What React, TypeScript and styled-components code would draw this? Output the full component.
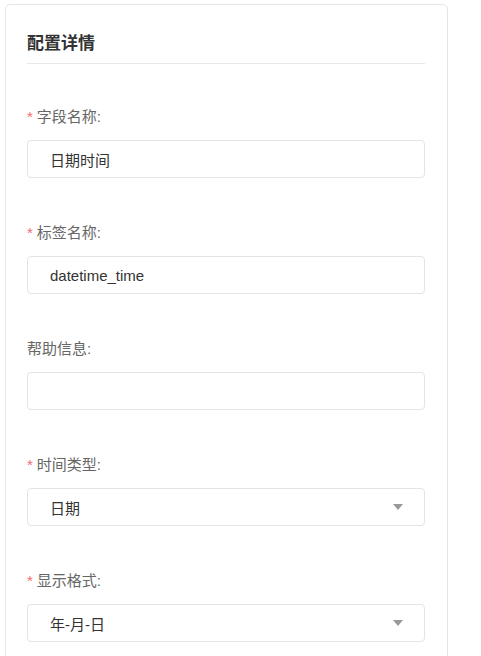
import React from "react";
import styled, { createGlobalStyle } from "styled-components";

type Field = {
  label: string;
  required?: boolean;
  value?: string;
  select?: boolean;
};

const fields: Field[] = [
  { label: "字段名称", required: true, value: "日期时间" },
  { label: "标签名称", required: true, value: "datetime_time" },
  { label: "帮助信息", value: "" },
  { label: "时间类型", required: true, value: "日期", select: true },
  { label: "显示格式", required: true, value: "年-月-日", select: true },
];

const App = (): JSX.Element => {
  return (
    <>
      <GlobalStyle />
      <Card>
        <Title>配置详情</Title>
        <Form>
          {fields.map((f) => (
            <FieldRow key={f.label}>
              <Label>
                {f.required && <Star>*</Star>}
                {f.label}:
              </Label>
              <InputBox>
                <Value>{f.value}</Value>
                {f.select && <Arrow />}
              </InputBox>
            </FieldRow>
          ))}
        </Form>
      </Card>
    </>
  );
};

export default App;

const GlobalStyle = createGlobalStyle`
  body {
    margin: 0;
    background: #ffffff;
    font-family: "Liberation Sans", "Noto Sans CJK SC", sans-serif;
  }
`;

const Card = styled.div`
  box-sizing: border-box;
  margin: 4px 0 0 5px;
  width: 443px;
  padding: 28px 22px 40px 21px;
  border: 1px solid #e6e6e6;
  border-radius: 5px;
  background: #ffffff;
`;

const Title = styled.div`
  font-size: 17px;
  font-weight: bold;
  line-height: 22px;
  color: #333333;
  padding-bottom: 8px;
  border-bottom: 1px solid #e8e8e8;
`;

const Form = styled.div`
  display: flex;
  flex-direction: column;
  gap: 45px;
  padding-top: 43px;
`;

const FieldRow = styled.div`
  display: flex;
  flex-direction: column;
  gap: 13px;
`;

const Label = styled.div`
  font-size: 15px;
  line-height: 20px;
  color: #666666;
`;

const Star = styled.span`
  color: #f56c6c;
  margin-right: 4px;
`;

const InputBox = styled.div`
  box-sizing: border-box;
  height: 38px;
  display: flex;
  align-items: center;
  justify-content: space-between;
  padding: 0 21px 0 22px;
  border: 1px solid #e4e4e4;
  border-radius: 4px;
`;

const Value = styled.span`
  font-size: 15px;
  color: #333333;
`;

const Arrow = styled.span`
  width: 0;
  height: 0;
  border-left: 5px solid transparent;
  border-right: 5px solid transparent;
  border-top: 6px solid #999999;
`;
